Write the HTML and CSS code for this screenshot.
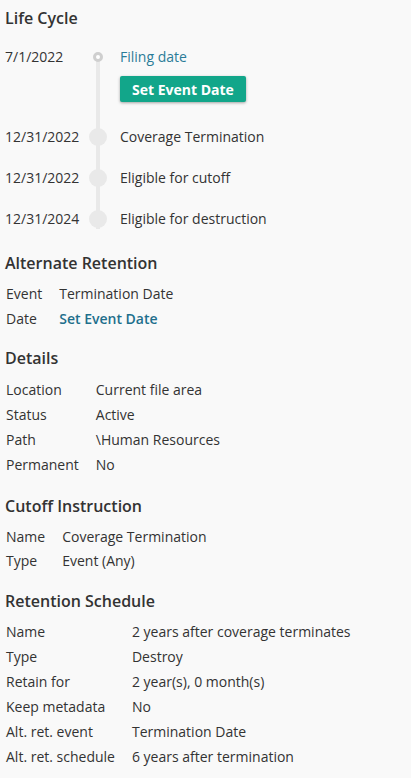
FILE: index.html
```html
<!DOCTYPE html>
<html>
<head>
<meta charset="utf-8">
<link rel="stylesheet" href="styles.css">
</head>
<body>
<div class="panel">
  <section class="section section-lifecycle">
    <h2 class="heading heading-lifecycle">Life Cycle</h2>
    <div class="timeline">
      <div class="tl-row tl-first">
        <div class="tl-date">7/1/2022</div>
        <div class="tl-mark"><span class="ring"></span></div>
        <div class="tl-body">
          <a class="link">Filing date</a>
          <button class="btn">Set Event Date</button>
        </div>
      </div>
      <div class="tl-row">
        <div class="tl-date">12/31/2022</div>
        <div class="tl-mark"><span class="dot"></span></div>
        <div class="tl-body">Coverage Termination</div>
      </div>
      <div class="tl-row">
        <div class="tl-date">12/31/2022</div>
        <div class="tl-mark"><span class="dot"></span></div>
        <div class="tl-body">Eligible for cutoff</div>
      </div>
      <div class="tl-row tl-last">
        <div class="tl-date">12/31/2024</div>
        <div class="tl-mark"><span class="dot"></span></div>
        <div class="tl-body">Eligible for destruction</div>
      </div>
    </div>
  </section>

  <section class="section">
    <h2 class="heading">Alternate Retention</h2>
    <div class="props">
      <div>Event</div><div>Termination Date</div>
      <div>Date</div><div><a class="link strong">Set Event Date</a></div>
    </div>
  </section>

  <section class="section section-details">
    <h2 class="heading heading-details">Details</h2>
    <div class="props">
      <div>Location</div><div>Current file area</div>
      <div>Status</div><div>Active</div>
      <div>Path</div><div>\Human Resources</div>
      <div>Permanent</div><div>No</div>
    </div>
  </section>

  <section class="section section-cutoff">
    <h2 class="heading">Cutoff Instruction</h2>
    <div class="props">
      <div>Name</div><div>Coverage Termination</div>
      <div>Type</div><div>Event (Any)</div>
    </div>
  </section>

  <section class="section">
    <h2 class="heading">Retention Schedule</h2>
    <div class="props">
      <div>Name</div><div>2 years after coverage terminates</div>
      <div>Type</div><div>Destroy</div>
      <div>Retain for</div><div>2 year(s), 0 month(s)</div>
      <div>Keep metadata</div><div>No</div>
      <div>Alt. ret. event</div><div>Termination Date</div>
      <div>Alt. ret. schedule</div><div>6 years after termination</div>
    </div>
  </section>
</div>
</body>
</html>
```
FILE: styles.css
```css
html, body {
  margin: 0;
  padding: 0;
  background: #f9f9f9;
}
body {
  font-family: "Open Sans", "Noto Sans", sans-serif;
  font-size: 14px;
  color: #333333;
}
.panel {
  padding: 7px 5px 0 5px;
}
.section {
  margin-bottom: 18px;
}
.section-lifecycle {
  margin-bottom: 12px;
}
.section-details {
  margin-bottom: 20px;
}
.section-cutoff {
  margin-bottom: 19px;
}
.heading {
  margin: 0 0 10px 0;
  font-size: 16px;
  font-weight: 600;
  line-height: 22px;
  color: #333333;
}
.heading-lifecycle {
  margin-bottom: 8px;
}
.heading-details {
  margin-bottom: 11px;
}
.link {
  color: #2b7c98;
  text-decoration: none;
  cursor: pointer;
}
.link.strong {
  color: #1e6f8c;
  font-weight: 600;
}

/* timeline */
.timeline {
  display: flex;
  flex-direction: column;
}
.tl-row {
  display: flex;
  line-height: 20px;
}
.tl-date {
  width: 83px;
  padding: 10px 0 11px 0;
}
.tl-mark {
  position: relative;
  width: 20px;
  flex: none;
}
.tl-mark::before {
  content: "";
  position: absolute;
  left: 8px;
  width: 4px;
  top: 0;
  bottom: 0;
  background: #e9e9e9;
}
.tl-first .tl-mark::before {
  top: 20px;
}
.tl-last .tl-mark::before {
  bottom: 11px;
}
.ring {
  position: absolute;
  left: 5px;
  top: 15px;
  width: 4px;
  height: 4px;
  border: 3px solid #cfcfcf;
  border-radius: 50%;
  background: #ffffff;
}
.dot {
  position: absolute;
  left: 1px;
  top: 11px;
  width: 18px;
  height: 18px;
  border-radius: 50%;
  background: #e9e9e9;
}
.tl-body {
  padding: 10px 0 11px 12px;
  display: flex;
  flex-direction: column;
  align-items: flex-start;
}
.tl-first .tl-body {
  padding-bottom: 15px;
}
.btn {
  margin-top: 9px;
  height: 26px;
  padding: 0 12px;
  border: none;
  border-radius: 2px;
  background: #12a68a;
  color: #ffffff;
  font-family: "Open Sans", "Noto Sans", sans-serif;
  font-size: 14px;
  font-weight: 700;
  box-shadow: 0 1px 3px rgba(0, 0, 0, 0.35);
}

/* property tables */
.props {
  display: grid;
  grid-template-columns: auto 1fr;
  column-gap: 17px;
  row-gap: 4.9px;
  line-height: 20px;
  padding-left: 1px;
}
```
